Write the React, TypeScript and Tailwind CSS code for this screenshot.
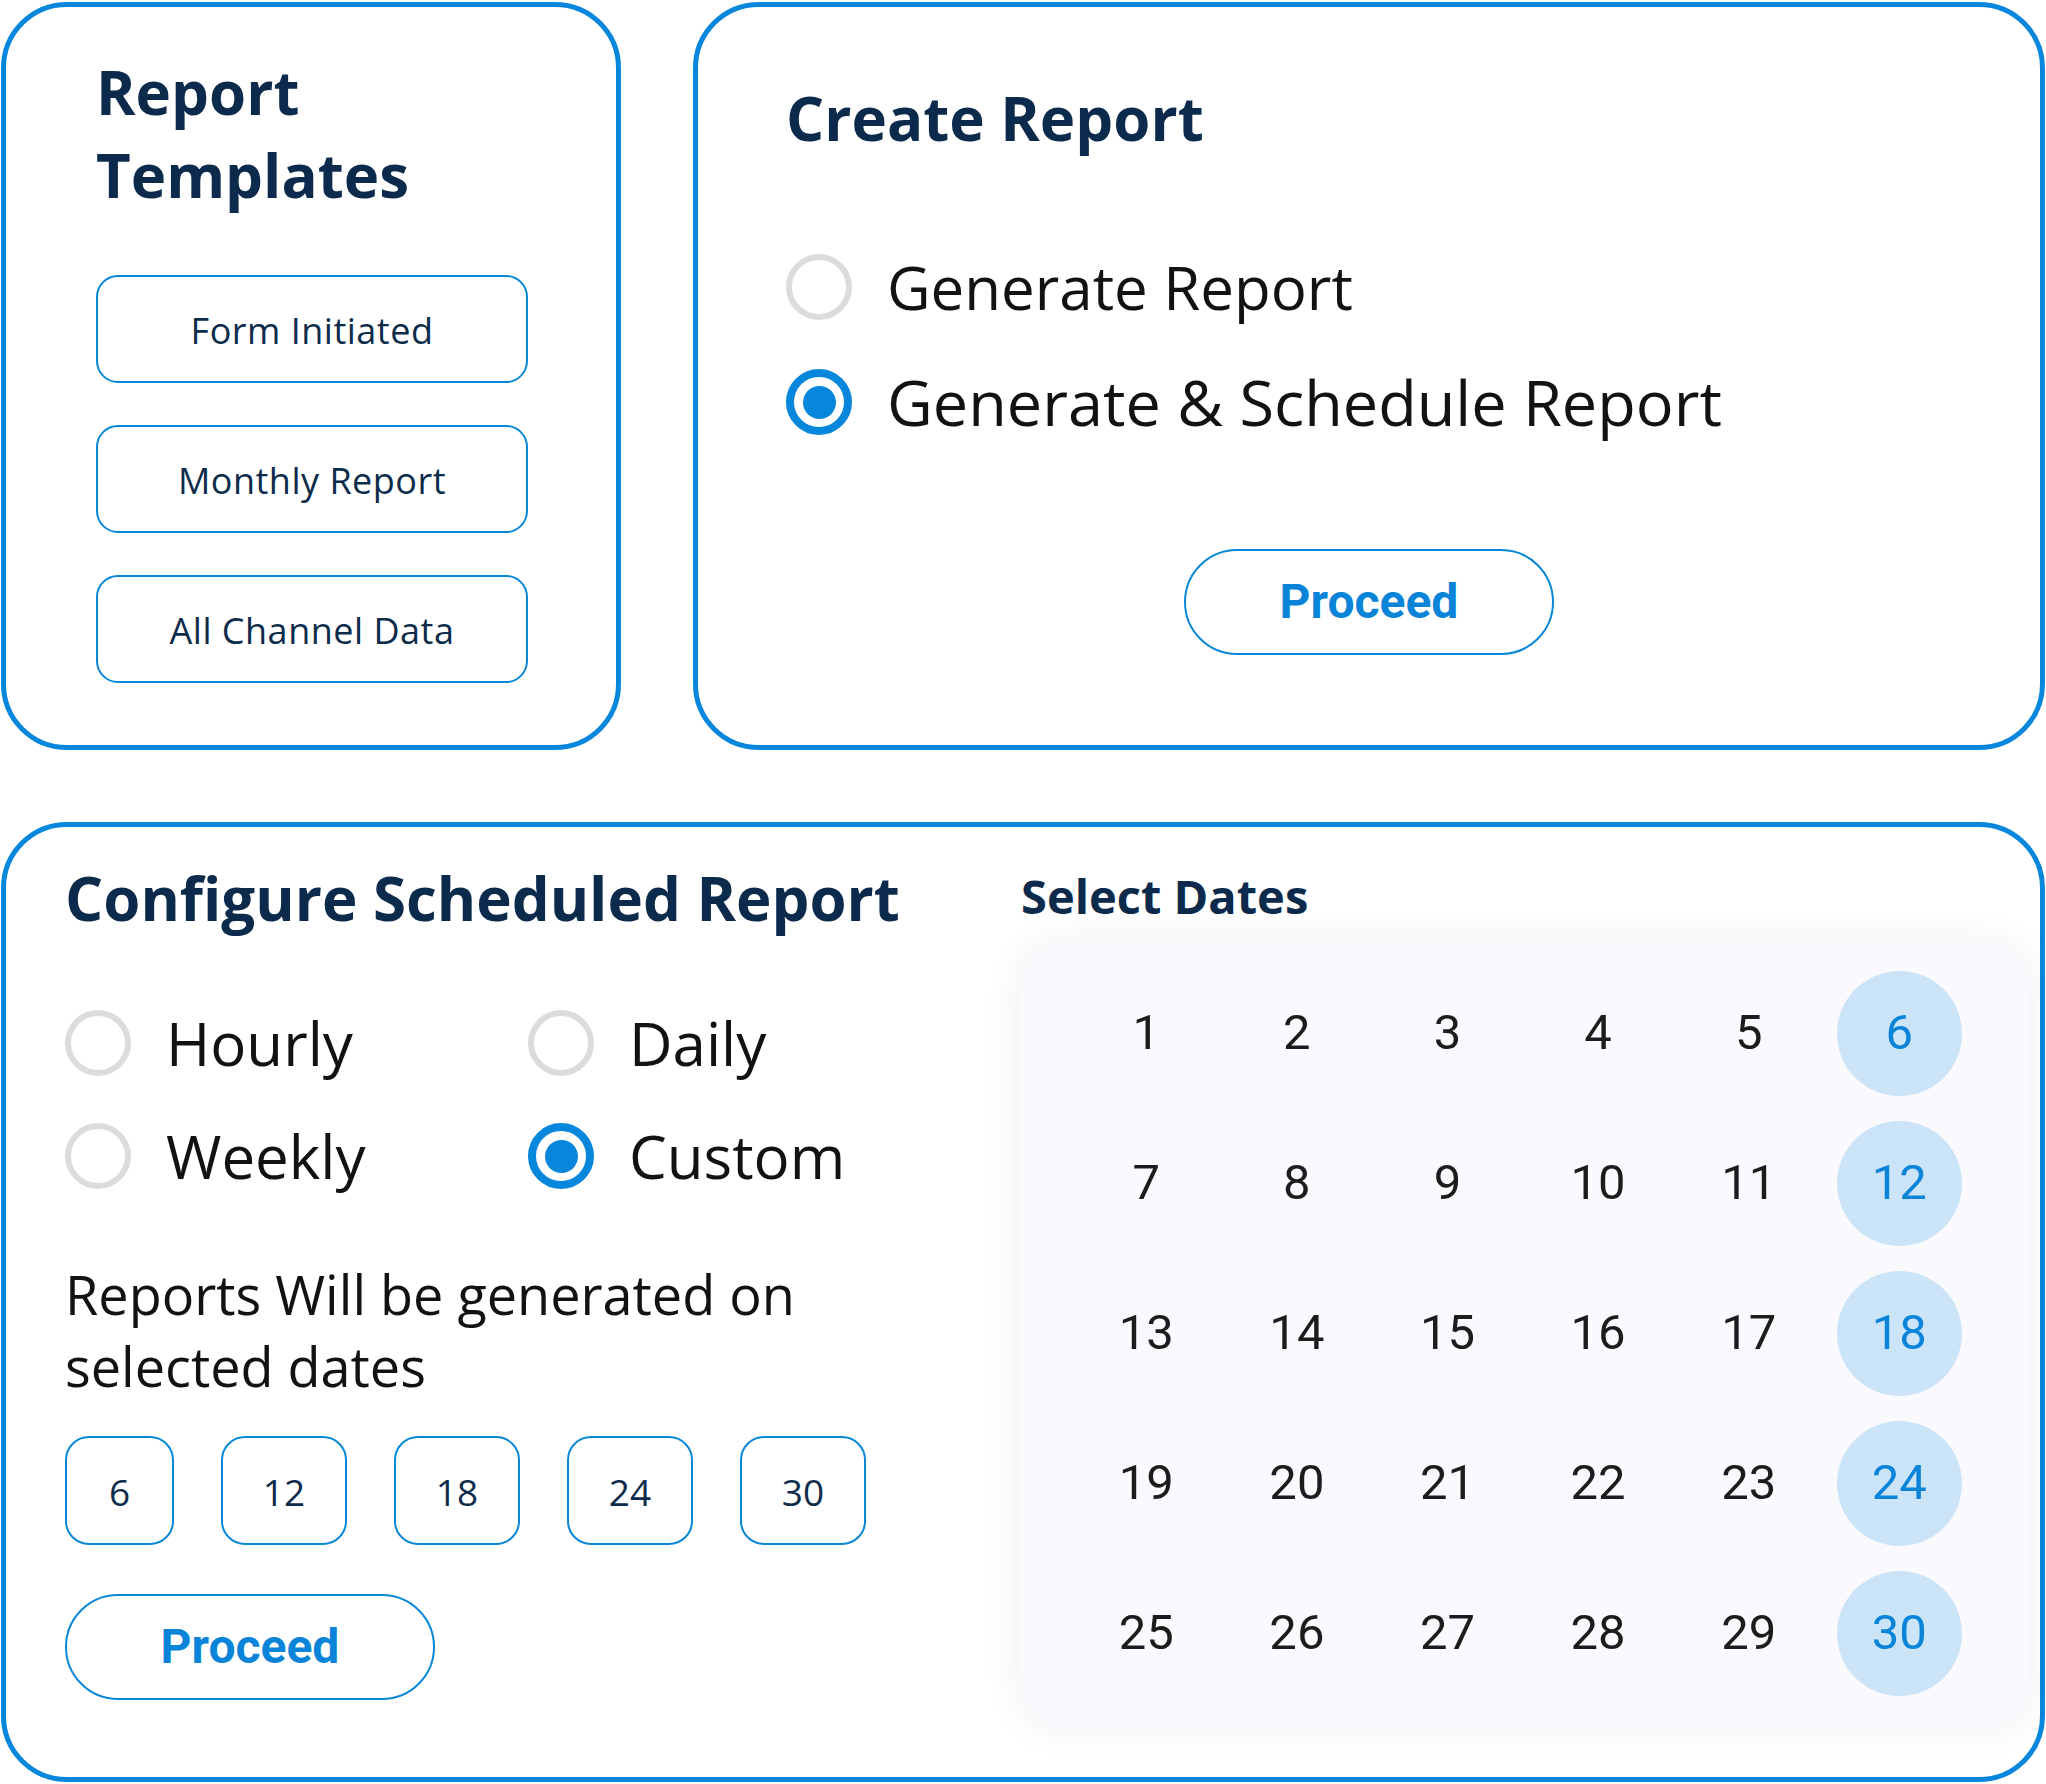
import React from "react";

const OPEN = "font-['Open_Sans','Noto_Sans',sans-serif]";
const ROBOTO = "font-['Roboto','Liberation_Sans',sans-serif]";

const templates = ["Form Initiated", "Monthly Report", "All Channel Data"];
const chips = [6, 12, 18, 24, 30];
const selectedDays = [6, 12, 18, 24, 30];

function Radio({ checked }: { checked?: boolean }) {
  if (checked) {
    return (
      <span className="flex h-[66px] w-[66px] shrink-0 items-center justify-center rounded-full border-[8px] border-[#0787dc]">
        <span className="h-[33px] w-[33px] rounded-full bg-[#0787dc]" />
      </span>
    );
  }
  return <span className="h-[66px] w-[66px] shrink-0 rounded-full border-[6px] border-[#dcdcdc]" />;
}

function RadioRow({
  label,
  checked,
  big,
}: {
  label: string;
  checked?: boolean;
  big?: boolean;
}) {
  return (
    <div className="flex h-[82px] items-center gap-[35px]">
      <Radio checked={checked} />
      <span
        className={`${OPEN} ${big ? "text-[63px]" : "text-[60px]"} leading-[82px] text-[#121212]`}
      >
        {label}
      </span>
    </div>
  );
}

function ProceedButton({ className = "" }: { className?: string }) {
  return (
    <button
      className={`flex h-[106px] w-[370px] items-center justify-center rounded-full border-2 border-[#0a88d8] ${ROBOTO} text-[48px] font-bold text-[#0a84d8] ${className}`}
    >
      Proceed
    </button>
  );
}

export default function App() {
  return (
    <div className="flex h-[1784px] w-[2046px] flex-col gap-[72px] bg-white px-[1px] pt-[2px]">
      <div className="flex gap-[72px]">
        {/* templates */}
        <section className="flex h-[748px] w-[620px] flex-col rounded-[66px] border-[5px] border-[#0787dc] pl-[90px] pt-[44px]">
          <h2 className={`${OPEN} text-[60px] font-bold leading-[83px] text-[#0c2a4b]`}>
            Report
            <br />
            Templates
          </h2>
          <div className="mt-[58px] flex flex-col gap-[42px]">
            {templates.map((t) => (
              <button
                key={t}
                className={`flex h-[108px] w-[432px] items-center justify-center rounded-[22px] border-2 border-[#0a88d8] pt-[4px] ${OPEN} text-[36px] tracking-[0.5px] text-[#0d2b4b]`}
              >
                {t}
              </button>
            ))}
          </div>
        </section>

        {/* create */}
        <section className="flex h-[748px] flex-1 flex-col rounded-[66px] border-[5px] border-[#0787dc] pl-[88px] pt-[70px]">
          <h2 className={`${OPEN} text-[60px] font-bold leading-[82px] text-[#0c2a4b]`}>Create Report</h2>
          <div className="mt-[87px] flex flex-col gap-[33px]">
            <RadioRow label="Generate Report" />
            <RadioRow label="Generate & Schedule Report" checked big />
          </div>
          <div className="mt-[106px] flex justify-center pr-[88px]">
            <ProceedButton />
          </div>
        </section>
      </div>

      {/* configure */}
      <section className="flex h-[960px] rounded-[66px] border-[5px] border-[#0787dc] pl-[59px] pr-[10px] pt-[30px]">
        <div className="flex flex-1 flex-col">
          <h2 className={`${OPEN} text-[60px] font-bold leading-[82px] text-[#0c2a4b]`}>
            Configure Scheduled Report
          </h2>
          <div className="mt-[63px] grid grid-cols-[463px_auto] gap-y-[31px]">
            <RadioRow label="Hourly" />
            <RadioRow label="Daily" />
            <RadioRow label="Weekly" />
            <RadioRow label="Custom" checked />
          </div>
          <p className={`${OPEN} mt-[61px] text-[54px] leading-[72px] text-[#121212]`}>
            Reports Will be generated on
            <br />
            selected dates
          </p>
          <div className="mt-[34px] flex gap-[47px]">
            {chips.map((c, i) => (
              <div
                key={c}
                className={`flex h-[109px] items-center justify-center rounded-[24px] border-2 border-[#0a88d8] pt-[2px] ${OPEN} text-[37px] text-[#0d2b4b] ${
                  i === 0 ? "w-[109px]" : "w-[126px]"
                }`}
              >
                {c}
              </div>
            ))}
          </div>
          <ProceedButton className="mt-[49px]" />
        </div>

        <div className="mt-[7px] flex w-[1009px] flex-col">
          <h3 className={`${OPEN} text-[47px] font-bold leading-[64px] text-[#0c2a4b]`}>Select Dates</h3>
          <div className="mt-[14px] h-[786px] rounded-[44px] bg-[#fafafe] pl-[50px] pt-[16px] shadow-[0_0_40px_rgba(0,0,0,0.07)]">
            <div className="grid grid-cols-[repeat(6,150.6px)] grid-rows-[repeat(5,150px)]">
              {Array.from({ length: 30 }, (_, i) => i + 1).map((d) => {
                const on = selectedDays.includes(d);
                return (
                  <div key={d} className="flex items-center justify-center">
                    <span
                      className={`flex h-[125px] w-[125px] items-center justify-center rounded-full ${ROBOTO} text-[49px] ${
                        on ? "bg-[#cce4f8] text-[#0a84d8]" : "text-[#1c1c1c]"
                      }`}
                    >
                      {d}
                    </span>
                  </div>
                );
              })}
            </div>
          </div>
        </div>
      </section>
    </div>
  );
}
